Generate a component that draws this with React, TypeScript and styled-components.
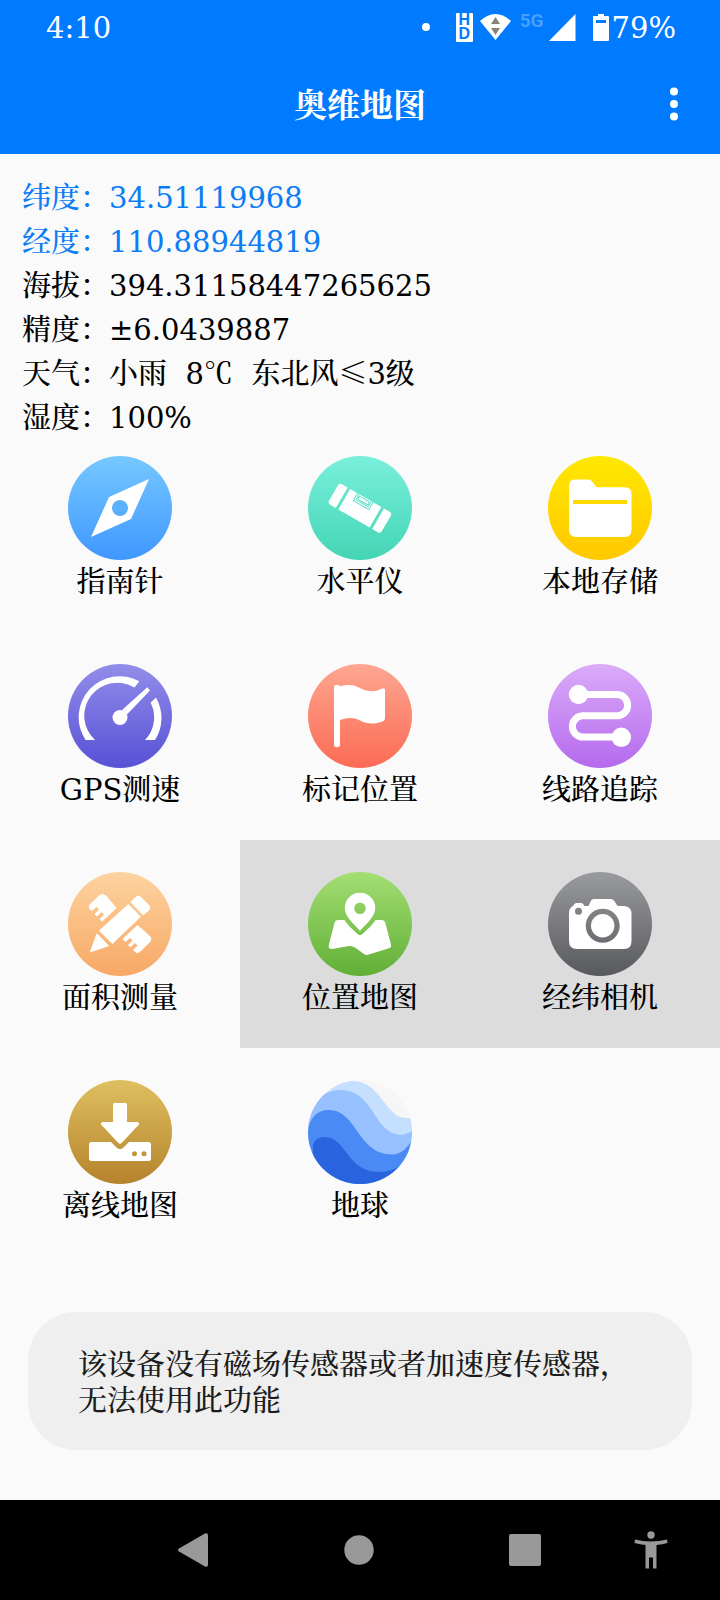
import React from "react";
import styled, { createGlobalStyle } from "styled-components";

const GlobalStyle = createGlobalStyle`
  *, *::before, *::after { box-sizing: border-box; }
  body {
    margin: 0;
    background: #fafafa;
    color: #000;
    font-family: "DejaVu Serif", "Noto Serif CJK SC", "Noto Sans CJK SC", serif;
    font-size: 29px;
    font-weight: 500;
  }
  button {
    border: 0;
    padding: 0;
    background: none;
    color: inherit;
    font: inherit;
    cursor: pointer;
  }
  svg { display: block; }
`;

const Page = styled.div`
  min-height: 100vh;
  display: flex;
  flex-direction: column;
`;

const Header = styled.header`
  background: #007aff;
  color: #fff;
`;

const StatusBar = styled.div`
  height: 54px;
  padding: 0 44px 0 46px;
  display: flex;
  align-items: center;
  justify-content: space-between;
  line-height: 32px;
`;

const StatusText = styled.span`
  padding-top: 2px;
`;

const StatusIcons = styled.div`
  display: flex;
  align-items: center;
`;

const NoticeDot = styled.span`
  width: 8px;
  height: 8px;
  margin-right: 26px;
  border-radius: 50%;
  background: #fff;
`;

const HdBadge = styled.span`
  width: 17px;
  height: 29px;
  margin-right: 7px;
  display: flex;
  flex-direction: column;
  align-items: center;
  border-radius: 1px;
  background: #fff;
  color: #007aff;
  font: 700 16px/14px "Liberation Sans", sans-serif;
`;

const NetworkType = styled.span`
  height: 28px;
  margin: 0 5px 0 9px;
  color: #47a0ff;
  font: 700 19px/16px Roboto, sans-serif;
`;

const Battery = styled.span`
  display: flex;
  align-items: center;
  gap: 3px;
  margin-left: 17px;
`;

const AppBar = styled.div`
  height: 100px;
  padding: 0 24px;
  display: grid;
  grid-template-columns: 1fr auto 1fr;
  align-items: center;
`;

const Title = styled.h1`
  grid-column: 2;
  margin: 0;
  padding-top: 4px;
  font-size: 33px;
  font-weight: 700;
  line-height: 40px;
`;

const MenuButton = styled.button`
  justify-self: end;
  width: 44px;
  height: 48px;
  display: grid;
  place-items: center;
`;

const Info = styled.dl`
  margin: 0 0 -16px;
  padding: 22px 22px 0;
`;

const InfoRow = styled.div<{ $accent?: boolean }>`
  display: flex;
  height: 44px;
  line-height: 44px;
  color: ${(p) => (p.$accent ? "#0a7cf5" : "#000")};
`;

const InfoLabel = styled.dt`
  white-space: nowrap;
`;

const InfoValue = styled.dd`
  margin: 0;
  white-space: pre;
`;

const CjkSymbol = styled.span`
  font-family: "Noto Serif CJK SC", "Noto Sans CJK SC", serif;
  line-height: 1;
`;

const ToolGrid = styled.main`
  display: grid;
  grid-template-columns: repeat(3, 1fr);
  grid-auto-rows: 208px;
`;

const Tool = styled.button<{ $pressed?: boolean }>`
  padding-top: 32px;
  display: flex;
  flex-direction: column;
  align-items: center;
  background: ${(p) => (p.$pressed ? "#dcdcdc" : "transparent")};
`;

const Disc = styled.span<{ $from: string; $to: string }>`
  width: 104px;
  height: 104px;
  border-radius: 50%;
  overflow: hidden;
  color: #fff;
  background: linear-gradient(${(p) => p.$from}, ${(p) => p.$to});
`;

const ToolLabel = styled.span`
  line-height: 44px;
`;

const Toast = styled.div`
  margin: auto 28px 50px;
  padding: 35px 50px 31px;
  border-radius: 48px;
  background: #efefef;
  color: #1c1c1c;
  line-height: 36px;
`;

const NavBar = styled.nav`
  height: 100px;
  padding: 0 26px 0 110px;
  display: grid;
  grid-template-columns: repeat(3, 1fr) 86px;
  background: #000;
  color: #999;
`;

const NavButton = styled.button`
  display: grid;
  place-items: center;
`;

const Glyph = ({ children }: { children: React.ReactNode }) => (
  <svg width="104" height="104" viewBox="0 0 104 104" fill="currentColor" aria-hidden="true">
    {children}
  </svg>
);

const tools = [
  {
    name: "指南针", from: "#76c8ff", to: "#3f97ff",
    icon: <path fillRule="evenodd" d="M81 23 63 63 23 81 41 41ZM52 44a8 8 0 1 0 0 16 8 8 0 0 0 0-16Z" />,
  },
  {
    name: "水平仪", from: "#7aefdc", to: "#43d5b4",
    icon: (
      <g transform="rotate(30 52 52)">
        <path d="M24.500 40.500H31V64H24.500a3 3 0 0 1-3-3V43.500a3 3 0 0 1 3-3ZM34 40.500H70V64H34ZM73 40.500h6.500a3 3 0 0 1 3 3V61a3 3 0 0 1-3 3H73Z" />
        <path d="M42.500 40.500v8.500h18v-8.500" fill="none" stroke="#5fe0c8" strokeWidth="1" />
        <path d="M44.500 40.500v6.500h14v-6.500" fill="none" stroke="#5fe0c8" strokeWidth="1" />
        <rect x="45.500" y="42" width="12" height="3.500" rx="1.700" fill="none" stroke="#5fe0c8" strokeWidth="1" />
      </g>
    ),
  },
  {
    name: "本地存储", from: "#ffe800", to: "#ffc800",
    icon: (
      <path fillRule="evenodd" d="M27 23.500H40.500Q43 23.500 44.500 26L47.500 30Q48.500 31.300 50.500 31.300H77Q83.500 31.300 83.500 38V74Q83.500 81 77 81H28Q21 81 21 74V30Q21 23.500 27 23.500ZM25 44v4H79V44Z" />
    ),
  },
  {
    name: "GPS测速", from: "#928de9", to: "#5751d6",
    icon: (
      <>
        <path d="M17.500 76A41 41 0 0 1 71.300 17.300L66.500 23.500A33 33 0 0 0 27 76ZM88 33.500A41 41 0 0 1 87 76H77A33 33 0 0 0 82.700 38.500Z" />
        <path d="M79.300 23.300 82 26.500 59 50.500 54 46Z" />
        <circle cx="52" cy="53.500" r="7.500" />
      </>
    ),
  },
  {
    name: "标记位置", from: "#fda791", to: "#fc6a54",
    icon: (
      <path d="M26 24Q26 20.700 29 20.700 31.500 20.700 32 22.300C40 20 46 20.500 53 24.500 61 28.500 68 27.500 74.500 24.500Q77 23.500 77 26V54Q77 56.200 75 57.200C66 61 58 59.500 52 56.500 45 53 39 53.500 32 56V80.500Q32 83.300 29 83.300T26 80.500Z" />
    ),
  },
  {
    name: "线路追踪", from: "#dbabf9", to: "#b56aed",
    icon: (
      <>
        <path d="M30 30.500H69a10.600 10.600 0 0 1 0 21.300H35a10.600 10.600 0 0 0 0 21.300H73" fill="none" stroke="currentColor" strokeWidth="7" />
        <circle cx="30.500" cy="30.500" r="9.700" />
        <circle cx="73.300" cy="73.300" r="9.700" />
      </>
    ),
  },
  {
    name: "面积测量", from: "#fdd3a0", to: "#f7a865",
    icon: (
      <g stroke="currentColor" strokeWidth="1" strokeLinejoin="round">
        <path d="M60.300 32.500 72.300 44.700 44.300 71.500 31.500 58.700Z" />
        <path d="M29 62 40.500 73.800 22.500 79.700Z" />
        <path d="M63 30.300 67.500 25.500Q70 23 72.500 25.200L81 33.500Q83 36 80.500 38.500L75 42.700Z" />
        <path d="M48 36 38.500 24.500Q35.500 21.500 32 23.200L22.500 32Q20.500 34.500 21.500 36.500L23.500 38.500 28.500 34.500 31.500 37.500 27 42 29 44 33.500 39.500 36.500 42.500 32 47 34 49.200Z" />
        <path d="M69.500 53.500 81.500 64Q84 66.500 82 69.500L72 79.500Q69.500 82 67 79.500L65.500 78 70 73.500 67 70.500 62.500 75 60.500 73 65 68.500 62 65.500 57.500 69.500 55 67Z" />
      </g>
    ),
  },
  {
    name: "位置地图", from: "#a3de73", to: "#61af37", pressed: true,
    icon: (
      <>
        <path fillRule="evenodd" d="M52 20.700A15.200 15.200 0 0 1 67.200 36C67.200 45 58 52 52 58.700 46 52 36.800 45 36.800 36A15.200 15.200 0 0 1 52 20.700ZM52 30.500a5.800 5.800 0 1 0 0 11.600 5.800 5.800 0 0 0 0-11.600Z" />
        <path d="M30 48H36.500C40 54 45 57.500 49 61.500Q52 64.500 55 61.500C59 57.500 64 54 67.500 48H74Q76.500 48 77.200 50.500L83 72.500Q83.500 75.500 81 76.300L60 82.800Q58 83.500 56 82L47 75.500Q44.500 73.500 41 74L24 77Q20.300 77 20.700 73.500L26.500 51Q27.300 48 30 48Z" />
      </>
    ),
  },
  {
    name: "经纬相机", from: "#9a9b9f", to: "#58595d", pressed: true,
    icon: (
      <>
        <path fillRule="evenodd" d="M40.500 34 43 28.500Q44 27 46 27H63Q65 27 66 28.500L68.500 32.500Q69.200 34 71 34H76Q83.500 34.500 83.500 42V69Q83.500 77 76 77H29Q21 77 21 69V41Q21 36 25 34L26.500 32Q27.200 31 28.500 31H33.500Q34.800 31 35.500 32.500L36.500 34ZM54.700 36.700a17 17 0 1 0 0 34 17 17 0 0 0 0-34ZM30.500 35.700a3.500 3.500 0 1 0 0 7 3.500 3.500 0 0 0 0-7Z" />
        <circle cx="54.700" cy="53.700" r="11.700" />
      </>
    ),
  },
  {
    name: "离线地图", from: "#dfbf60", to: "#b5832d",
    icon: (
      <>
        <path d="M46.500 23H57.500Q59 23 59 24.500V42H69.500Q72 42.500 70.500 45L54 62.500Q52 65 50 62.500L33.500 45Q32 42.500 34.500 42H45V24.500Q45 23 46.500 23Z" />
        <path fillRule="evenodd" d="M23.500 62H43L48.500 67.500Q52 70.500 55.500 67.500L61 62H80.500Q83 62 83 64.500V78.500Q83 81 80.500 81H23.500Q21 81 21 78.500V64.500Q21 62 23.500 62ZM66.500 71.200a2.500 2.500 0 1 0 0 5 2.500 2.500 0 0 0 0-5ZM76 71.200a2.500 2.500 0 1 0 0 5 2.500 2.500 0 0 0 0-5Z" />
      </>
    ),
  },
  {
    name: "地球", from: "#f7f7f7", to: "#f3f3f3",
    icon: (
      <>
        <path fill="#c5dfff" d="M0 30C18 9 32 1 45 1 74 2 77 38 98 38H104V104H0Z" />
        <path fill="#97c1fe" d="M0 42C4 20 17 10 33 10 66 10 66 54 92 54.700 97 54.700 101 53 104 51V104H0Z" />
        <path fill="#4a8af4" d="M0 52C1 38 9 30 21 30 49 30 49 74 84 74.500 92 74.500 99 69 104 60V104H0Z" />
        <path fill="#2a63de" d="M5 70C4 61 9 57 17 57 38 57 39 92 71 92 80 92 88 89 95 84V104H0Z" />
      </>
    ),
  },
];

const readings = [
  { label: "纬度：", value: "34.51119968", accent: true },
  { label: "经度：", value: "110.88944819", accent: true },
  { label: "海拔：", value: "394.31158447265625" },
  { label: "精度：", value: "±6.0439887" },
  {
    label: "天气：",
    value: (
      <>
        小雨{"  "}8<CjkSymbol>℃</CjkSymbol>{"  "}东北风<CjkSymbol>≤</CjkSymbol>3级
      </>
    ),
  },
  { label: "湿度：", value: "100%" },
];

export default function App() {
  return (
    <Page lang="zh-CN">
      <GlobalStyle />
      <Header>
        <StatusBar>
          <StatusText>4:10</StatusText>
          <StatusIcons>
            <NoticeDot />
            <HdBadge><span>H</span><span>D</span></HdBadge>
            <svg width="31" height="26" viewBox="0 0 31 26" aria-hidden="true">
              <path d="M0 7Q15.500-7 31 7L15.500 26Z" fill="#fff" />
              <path d="M15.500 3 20 10H11ZM11 14h9l-4.500 7Z" fill="#8a8378" />
            </svg>
            <NetworkType>5G</NetworkType>
            <svg width="27" height="27" viewBox="0 0 27 27" aria-hidden="true">
              <path d="M26.500 0V27H0Z" fill="#fff" />
            </svg>
            <Battery>
              <svg width="16" height="27" viewBox="0 0 16 27" aria-hidden="true">
                <path fillRule="evenodd" fill="#fff" d="M5 0h6v2h4q1 0 1 1v23q0 1-1 1H1q-1 0-1-1V3q0-1 1-1h4ZM3 6v3h10V6Z" />
              </svg>
              <StatusText>79%</StatusText>
            </Battery>
          </StatusIcons>
        </StatusBar>
        <AppBar>
          <Title>奥维地图</Title>
          <MenuButton aria-label="更多">
            <svg width="8" height="34" viewBox="0 0 8 34" fill="#fff" aria-hidden="true">
              <circle cx="4" cy="4.500" r="4" />
              <circle cx="4" cy="17" r="4" />
              <circle cx="4" cy="29.500" r="4" />
            </svg>
          </MenuButton>
        </AppBar>
      </Header>

      <Info>
        {readings.map((r) => (
          <InfoRow key={r.label} $accent={r.accent}>
            <InfoLabel>{r.label}</InfoLabel>
            <InfoValue>{r.value}</InfoValue>
          </InfoRow>
        ))}
      </Info>

      <ToolGrid>
        {tools.map((t) => (
          <Tool key={t.name} $pressed={t.pressed}>
            <Disc $from={t.from} $to={t.to}>
              <Glyph>{t.icon}</Glyph>
            </Disc>
            <ToolLabel>{t.name}</ToolLabel>
          </Tool>
        ))}
      </ToolGrid>

      <Toast role="status">该设备没有磁场传感器或者加速度传感器，无法使用此功能</Toast>

      <NavBar>
        <NavButton aria-label="返回">
          <svg width="30" height="34" viewBox="0 0 30 34" fill="currentColor" aria-hidden="true">
            <path d="M1 15.500 27 .5Q30-.5 30 2.500V31.500Q30 34.500 27 33.500L1 18.500Q-1 17 1 15.500Z" />
          </svg>
        </NavButton>
        <NavButton aria-label="主页">
          <svg width="30" height="30" viewBox="0 0 30 30" fill="currentColor" aria-hidden="true">
            <circle cx="15" cy="15" r="14.700" />
          </svg>
        </NavButton>
        <NavButton aria-label="最近任务">
          <svg width="32" height="32" viewBox="0 0 32 32" fill="currentColor" aria-hidden="true">
            <rect width="32" height="32" rx="2" />
          </svg>
        </NavButton>
        <NavButton aria-label="无障碍">
          <svg width="34" height="38" viewBox="0 0 34 38" fill="currentColor" aria-hidden="true">
            <circle cx="17" cy="4" r="3.700" />
            <path d="M1 8.500Q17 12.500 33 8.500L33.500 12Q28 13.500 22.500 14V37.500H19V26.500H15V37.500H11.500V14Q6 13.500.5 12Z" />
          </svg>
        </NavButton>
      </NavBar>
    </Page>
  );
}
